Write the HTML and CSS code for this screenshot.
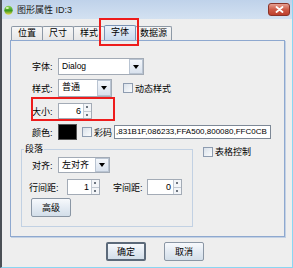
FILE: index.html
```html
<!DOCTYPE html>
<html lang="zh-CN">
<head>
    <meta charset="UTF-8" />
    <title>图形属性</title>
    <link rel="stylesheet" href="styles.css">
</head>
<body>
    <div class="window">
        <div class="titlebar">
            <svg class="app-icon" width="9" height="10" viewBox="0 0 9 10">
                <defs>
                    <linearGradient id="g" x1="0" y1="0" x2="0" y2="1">
                        <stop offset="0" stop-color="#8fd45a"/>
                        <stop offset="0.55" stop-color="#3a9a1c"/>
                        <stop offset="1" stop-color="#e8d84a"/>
                    </linearGradient>
                </defs>
                <ellipse cx="4.5" cy="5.2" rx="4.2" ry="4.5" fill="url(#g)"/>
                <ellipse cx="3.3" cy="3" rx="1.6" ry="1" fill="#d6f5b8"/>
            </svg>
            <span class="title">图形属性 ID:3</span>
            <div class="close-btn">
                <svg width="9" height="7" viewBox="0 0 9 7">
                    <path d="M1.5 1 L7.5 6 M7.5 1 L1.5 6" stroke="#fff" stroke-width="1.8" stroke-linecap="round"/>
                </svg>
            </div>
        </div>

        <div class="tabs">
            <div class="tab">位置</div>
            <div class="tab">尺寸</div>
            <div class="tab">样式</div>
            <div class="tab active">字体</div>
            <div class="tab tab-wide">数据源</div>
        </div>

        <div class="panel">
            <div class="row">
                <span class="label">字体:</span>
                <div class="combo combo-font">
                    <span class="combo-text">Dialog</span>
                    <span class="combo-arrow"></span>
                </div>
            </div>

            <div class="row row-style">
                <span class="label">样式:</span>
                <div class="combo combo-style">
                    <span class="combo-text">普通</span>
                    <span class="combo-arrow"></span>
                </div>
                <span class="check check-dynamic"><span class="box"></span>动态样式</span>
            </div>

            <div class="row row-size">
                <span class="label">大小:</span>
                <div class="spinner spinner-size">
                    <span class="spin-value">6</span>
                    <span class="spin-btns"><span class="up"></span><span class="down"></span></span>
                </div>
            </div>

            <div class="row row-color">
                <span class="label">颜色:</span>
                <span class="swatch"></span>
                <span class="check check-code"><span class="box"></span>彩码</span>
                <div class="text-field">,831B1F,086233,FFA500,800080,FFC0CB</div>
            </div>

            <div class="lower">
                <fieldset class="group">
                    <legend>段落</legend>
                    <div class="row row-align">
                        <span class="label">对齐:</span>
                        <div class="combo combo-align">
                            <span class="combo-text">左对齐</span>
                            <span class="combo-arrow"></span>
                        </div>
                    </div>
                    <div class="row row-spacing">
                        <span class="label">行间距:</span>
                        <div class="spinner spinner-line">
                            <span class="spin-value">1</span>
                            <span class="spin-btns"><span class="up"></span><span class="down"></span></span>
                        </div>
                        <span class="label label-char">字间距:</span>
                        <div class="spinner spinner-char">
                            <span class="spin-value">0</span>
                            <span class="spin-btns"><span class="up"></span><span class="down"></span></span>
                        </div>
                    </div>
                    <div class="btn btn-advanced">高级</div>
                </fieldset>
                <span class="check check-table"><span class="box"></span>表格控制</span>
            </div>
        </div>

        <div class="buttons">
            <div class="btn btn-default">确定</div>
            <div class="btn">取消</div>
        </div>
    </div>
</body>
</html>
```

FILE: styles.css
```css
body {
    margin: 0;
    background-color: #eeeeee;
    font-family: "Liberation Sans", "Noto Sans CJK SC", sans-serif;
    font-size: 9px;
    color: #000;
}

.window {
    width: 293px;
    height: 268px;
    box-sizing: border-box;
    background-color: #eeeeee;
    border-left: 2px solid #4a4f55;
    border-right: 1px solid #8ad6f2;
    border-bottom: 1px solid #8ad6f2;
}

/* title bar */
.titlebar {
    display: flex;
    align-items: center;
    height: 19px;
    padding: 0 2px;
    background: linear-gradient(#bfd2ea, #d3e1f1);
}

.app-icon {
    margin-right: 4px;
}

.title {
    flex: 1;
    color: #1a1a1a;
}

.close-btn {
    display: flex;
    justify-content: center;
    align-items: center;
    width: 20px;
    height: 11px;
    border: 1px solid #8a3328;
    border-radius: 3px;
    background: linear-gradient(#e5a092, #cf5c48 50%, #bd3f2c);
}

/* tabs */
.tabs {
    display: flex;
    align-items: flex-end;
    height: 15px;
    margin-top: 6px;
    padding-left: 9px;
}

.tab {
    position: relative;
    height: 13px;
    padding: 0 6px;
    line-height: 13px;
    border: 1px solid #8d99a6;
    border-bottom: none;
    border-radius: 2px 2px 0 0;
    background: linear-gradient(#f7f7f7, #e6e6e6);
}

.tab + .tab {
    margin-left: -1px;
}

.tab-wide {
    padding: 0 4px;
}

.tab.active {
    height: 14px;
    background: linear-gradient(#e9f1fa, #c9dbef);
    border-color: #7a92b4;
    z-index: 1;
}

.tab.active::after {
    content: "";
    position: absolute;
    left: -6px;
    right: -4px;
    top: -8px;
    bottom: -6px;
    border: 2px solid #ee1c1c;
}

/* panel */
.panel {
    height: 197px;
    box-sizing: border-box;
    margin: 0 7px 0 8px;
    padding: 17px 0 0 10px;
    border: 1px solid #8ea8cf;
    box-shadow: 1px 1px 0 #c3d1e4;
}

.row {
    display: flex;
    align-items: center;
    height: 17px;
    padding-left: 11px;
}

.label {
    width: 26px;
    flex-shrink: 0;
}

.row-style {
    height: 18px;
    margin-top: 4px;
}

.row-size {
    position: relative;
    height: 16px;
    margin-top: 6px;
    width: 62px;
}

.row-size::after {
    content: "";
    position: absolute;
    left: 10px;
    right: -21px;
    top: -6px;
    bottom: -2px;
    border: 2px solid #ee1c1c;
}

.row-color {
    height: 16px;
    margin-top: 5px;
}

/* combo box */
.combo {
    display: flex;
    height: 100%;
    box-sizing: border-box;
    border: 1px solid #a3abb6;
    background-color: #fff;
}

.combo-text {
    flex: 1;
    padding-left: 3px;
    line-height: 15px;
}

.combo-arrow {
    position: relative;
    width: 12px;
    border: 1px solid #b9c4d2;
    background: linear-gradient(#f4f7fb, #d9e2ee);
}

.combo-arrow::after {
    content: "";
    position: absolute;
    left: 3px;
    top: 50%;
    margin-top: -2px;
    border-left: 3px solid transparent;
    border-right: 3px solid transparent;
    border-top: 4px solid #000;
}

.combo-font {
    width: 86px;
    font-size: 8.5px;
}

.combo-style {
    width: 54px;
}

.combo-align {
    width: 52px;
}

/* spinner */
.spinner {
    display: flex;
    height: 16px;
    box-sizing: border-box;
    border: 1px solid #a3abb6;
    background-color: #fff;
}

.spin-value {
    flex: 1;
    text-align: right;
    padding-right: 2px;
    line-height: 14px;
}

.spin-btns {
    display: flex;
    flex-direction: column;
    width: 7px;
    border-left: 1px solid #c2c9d2;
}

.spin-btns span {
    position: relative;
    flex: 1;
    background: #f3f5f8;
}

.spin-btns .up {
    border-bottom: 1px solid #c2c9d2;
}

.spin-btns .up::after,
.spin-btns .down::after {
    content: "";
    position: absolute;
    left: 2px;
    top: 2px;
    width: 2px;
    height: 2px;
    background: #6d7580;
}

.spinner-size {
    width: 34px;
}

.spinner-line {
    width: 33px;
}

.spinner-char {
    width: 35px;
}

/* checkbox */
.check {
    display: flex;
    align-items: center;
    white-space: nowrap;
}

.box {
    width: 8px;
    height: 8px;
    margin-right: 2px;
    border: 1px solid #8e9cb0;
    background: linear-gradient(135deg, #d9e1ea, #fbfcfd);
}

.check-dynamic {
    margin-left: 11px;
}

.swatch {
    width: 19px;
    height: 16px;
    box-sizing: border-box;
    background-color: #000;
    border: 1px solid #555;
}

.check-code {
    margin-left: 5px;
}

.text-field {
    width: 157px;
    height: 14px;
    box-sizing: border-box;
    margin-left: 2px;
    padding-left: 1px;
    border: 1px solid #7d8896;
    background-color: #fff;
    font-size: 8px;
    line-height: 12px;
    white-space: nowrap;
    overflow: hidden;
}

/* paragraph group */
.lower {
    display: flex;
    align-items: flex-start;
    margin-top: 4px;
}

.group {
    width: 172px;
    height: 83px;
    box-sizing: border-box;
    margin: 0;
    padding: 2px 0 0 0;
    border: 1px solid #c2d1e3;
}

.group legend {
    padding: 0 1px;
    margin-left: 2px;
    line-height: 11px;
}

.group .row {
    padding-left: 10px;
}

.row-align {
    height: 16px;
}

.row-spacing {
    height: 16px;
    margin-top: 6px;
}

.row-spacing .label {
    width: 38px;
    margin-left: -3px;
}

.row-spacing .label-char {
    width: 34px;
    margin-left: 13px;
}

.check-table {
    margin-left: 10px;
    margin-top: 1px;
}

/* buttons */
.btn {
    display: flex;
    justify-content: center;
    align-items: center;
    width: 40px;
    height: 19px;
    box-sizing: border-box;
    border: 1px solid #8a96a4;
    border-radius: 2px;
    background: linear-gradient(#f7f9fc, #e4ebf3 50%, #d3dee9);
}

.btn-advanced {
    margin: 3px 0 0 9px;
}

.buttons {
    display: flex;
    gap: 18px;
    padding: 5px 0 0 104px;
}

.btn-default {
    border: 2px solid #5c6a7a;
}
```
